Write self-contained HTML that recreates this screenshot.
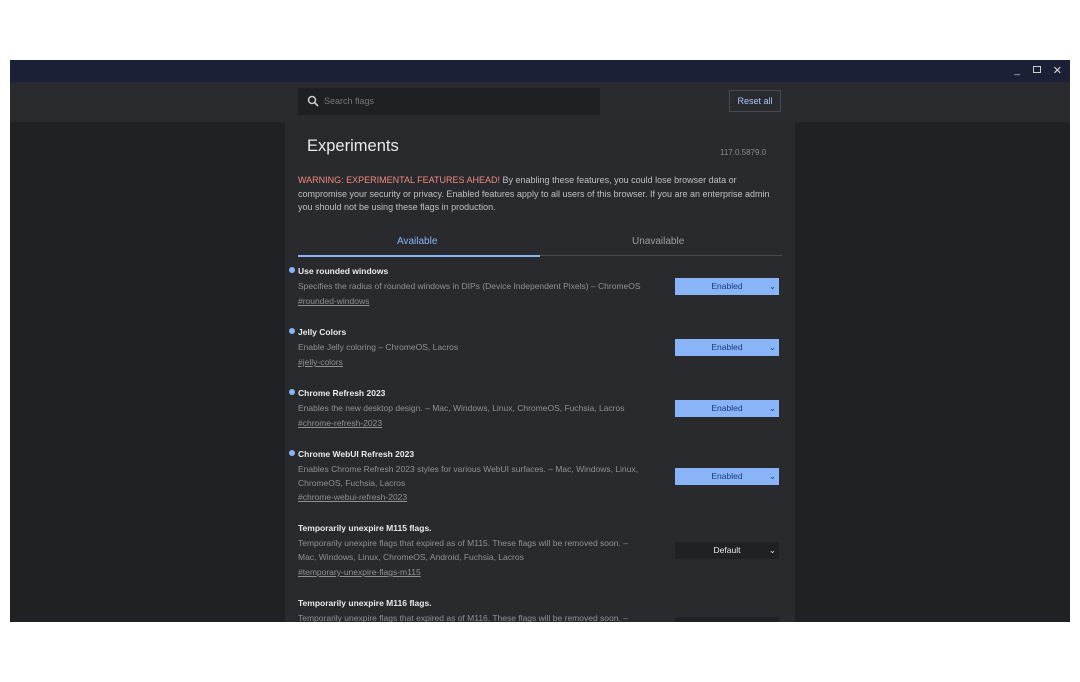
<!DOCTYPE html>
<html><head><style>
*{margin:0;padding:0;box-sizing:border-box}
body{width:1080px;height:682px;background:#fff;position:relative;overflow:hidden;font-family:"Liberation Sans",sans-serif}
.win{position:absolute;left:10px;top:60px;width:1060px;height:562px;background:#202124;overflow:hidden}
.title{position:absolute;left:0;top:0;width:1060px;height:22px;background:#1b2036}
.tool{position:absolute;left:0;top:22px;width:1060px;height:40px;background:#2a2b2e}
.panel{position:absolute;left:275px;top:62px;width:510px;height:500px;background:#292a2d}
.a{position:absolute;white-space:nowrap}
.search{left:288px;top:28px;width:302px;height:27px;background:#1f2023;color:#777;font-size:9px;padding:8px 0 0 26px}
.reset{left:719px;top:30px;width:52px;height:22px;border:1px solid #4a4b4f;color:#a8c7fa;font-size:9px;text-align:center;line-height:20px}
.h1{left:297px;top:77px;color:#e8eaed;font-size:16.5px}
.ver{left:710px;top:88px;color:#8a8c90;font-size:8px}
.warn{left:288px;top:114px;width:478px;color:#bdc1c6;font-size:9px;line-height:13.5px;white-space:normal}
.tab{color:#8ab4f8;font-size:10px}
.ft{color:#e8eaed;font-size:8.5px;font-weight:bold}
.fd{color:#8e9196;font-size:8.5px;line-height:13.5px}
.fl{color:#8e9196;font-size:8.5px;text-decoration:underline}
.dot{width:6px;height:6px;border-radius:50%;background:#8ab4f8}
.sel{width:104px;height:17px;background:#8ab4f8;color:#1a3a80;font-size:8.5px;line-height:17px;text-align:center}
.sel span{position:absolute;right:3px;top:0}
.def{background:#202124;color:#e8eaed}
</style></head><body>
<div class="win">
<div class="title"></div>
<div class="a" style="right:50px;top:5px;color:#ccc;font-size:10px">_</div>
<div class="a" style="right:29px;top:6px;width:8px;height:7px;border:1.5px solid #ccc"></div>
<div class="a" style="right:8px;top:4px;color:#ddd;font-size:11px">✕</div>
<div class="tool"></div>
<div class="panel"></div>
<div class="a search">Search flags</div>
<svg class="a" style="left:297px;top:35px" width="12" height="12" viewBox="0 0 12 12"><circle cx="5" cy="5" r="3.5" fill="none" stroke="#ccc" stroke-width="1.5"/><path d="M7.5 7.5L11 11" stroke="#ccc" stroke-width="1.6"/></svg>
<div class="a reset">Reset all</div>
<div class="a h1">Experiments</div>
<div class="a ver">117.0.5879.0</div>
<div class="a warn"><span style="color:#f28b82">WARNING: EXPERIMENTAL FEATURES AHEAD!</span> By enabling these features, you could lose browser data or compromise your security or privacy. Enabled features apply to all users of this browser. If you are an enterprise admin you should not be using these flags in production.</div>
<div class="a tab" style="left:387px;top:176px">Available</div>
<div class="a tab" style="left:622px;top:176px;color:#9aa0a6">Unavailable</div>
<div class="a" style="left:288px;top:195px;width:484px;height:1px;background:#4a4b4f"></div>
<div class="a" style="left:288px;top:195px;width:242px;height:2px;background:#8ab4f8"></div>

<div class="a dot" style="left:279px;top:207px"></div>
<div class="a ft" style="left:288px;top:206px">Use rounded windows</div>
<div class="a fd" style="left:288px;top:220px">Specifies the radius of rounded windows in DIPs (Device Independent Pixels) – ChromeOS</div>
<div class="a fl" style="left:288px;top:236px">#rounded-windows</div>
<div class="a sel" style="left:665px;top:218px">Enabled<span>⌄</span></div>

<div class="a dot" style="left:279px;top:268px"></div>
<div class="a ft" style="left:288px;top:267px">Jelly Colors</div>
<div class="a fd" style="left:288px;top:281px">Enable Jelly coloring – ChromeOS, Lacros</div>
<div class="a fl" style="left:288px;top:297px">#jelly-colors</div>
<div class="a sel" style="left:665px;top:279px">Enabled<span>⌄</span></div>

<div class="a dot" style="left:279px;top:329px"></div>
<div class="a ft" style="left:288px;top:328px">Chrome Refresh 2023</div>
<div class="a fd" style="left:288px;top:342px">Enables the new desktop design. – Mac, Windows, Linux, ChromeOS, Fuchsia, Lacros</div>
<div class="a fl" style="left:288px;top:358px">#chrome-refresh-2023</div>
<div class="a sel" style="left:665px;top:340px">Enabled<span>⌄</span></div>

<div class="a dot" style="left:279px;top:390px"></div>
<div class="a ft" style="left:288px;top:389px">Chrome WebUI Refresh 2023</div>
<div class="a fd" style="left:288px;top:403px">Enables Chrome Refresh 2023 styles for various WebUI surfaces. – Mac, Windows, Linux,<br>ChromeOS, Fuchsia, Lacros</div>
<div class="a fl" style="left:288px;top:432px">#chrome-webui-refresh-2023</div>
<div class="a sel" style="left:665px;top:408px">Enabled<span>⌄</span></div>

<div class="a ft" style="left:288px;top:463px">Temporarily unexpire M115 flags.</div>
<div class="a fd" style="left:288px;top:477px">Temporarily unexpire flags that expired as of M115. These flags will be removed soon. –<br>Mac, Windows, Linux, ChromeOS, Android, Fuchsia, Lacros</div>
<div class="a fl" style="left:288px;top:507px">#temporary-unexpire-flags-m115</div>
<div class="a sel def" style="left:665px;top:482px">Default<span>⌄</span></div>

<div class="a ft" style="left:288px;top:538px">Temporarily unexpire M116 flags.</div>
<div class="a fd" style="left:288px;top:552px">Temporarily unexpire flags that expired as of M116. These flags will be removed soon. –</div>
<div class="a sel def" style="left:665px;top:557px"></div>
</div>
</body></html>
